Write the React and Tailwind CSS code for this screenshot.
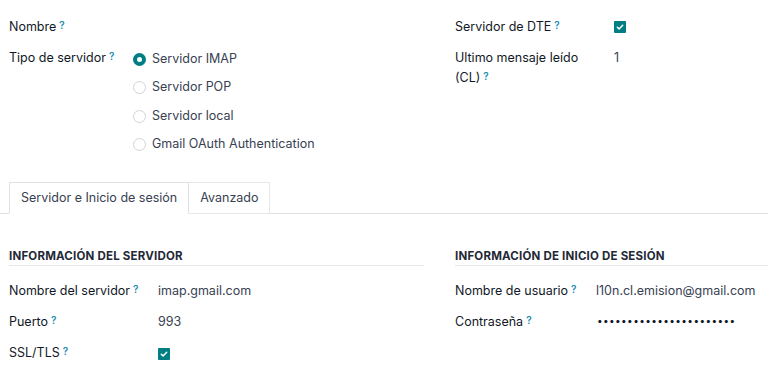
import React from "react";

function Help() {
  return <sup className="ml-[3px] text-[10px] font-semibold text-[#1a8bb0] relative -top-[2px]">?</sup>;
}

function Check() {
  return (
    <span className="inline-flex w-[12px] h-[12px] items-center justify-center bg-[#017e84] rounded-[1px]">
      <svg width="8" height="8" viewBox="0 0 8 8" fill="none">
        <path d="M1.3 4.2 L3.1 5.9 L6.7 2.2" stroke="white" strokeWidth="1.5" strokeLinecap="round" strokeLinejoin="round" />
      </svg>
    </span>
  );
}

function Radio({ checked, label }) {
  return (
    <div className="flex items-center h-[28.5px]">
      {checked ? (
        <span className="w-[13px] h-[13px] rounded-full border-[4px] border-[#017e84] bg-white" />
      ) : (
        <span className="w-[13px] h-[13px] rounded-full border border-[#d4d4d8] bg-white" />
      )}
      <span className="ml-[6px] text-[#374151]">{label}</span>
    </div>
  );
}

export default function App() {
  return (
    <div
      className="w-[768px] h-[374px] bg-white text-[12.5px] text-[#111827] overflow-hidden"
      style={{ fontFamily: "Inter, 'Noto Sans', sans-serif" }}
    >
      {/* top section */}
      <div className="grid grid-cols-[415px_313px] gap-x-[31px] pl-[9px] pt-[17px]">
        <div>
          <div className="flex h-[20px] items-center">
            <span>Nombre</span>
            <Help />
          </div>
          <div className="flex mt-[8px]">
            <div className="w-[124px] pt-[4px]">
              <span>Tipo de servidor</span>
              <Help />
            </div>
            <div>
              <Radio checked label="Servidor IMAP" />
              <Radio label="Servidor POP" />
              <Radio label="Servidor local" />
              <Radio label="Gmail OAuth Authentication" />
            </div>
          </div>
        </div>
        <div>
          <div className="flex h-[20px] items-center">
            <div className="w-[159px]">
              <span>Servidor de DTE</span>
              <Help />
            </div>
            <Check />
          </div>
          <div className="flex mt-[11px] leading-[20px]">
            <div className="w-[159px]">
              Ultimo mensaje leído
              <br />
              (CL)
              <Help />
            </div>
            <span className="text-[#374151]">1</span>
          </div>
        </div>
      </div>

      {/* tabs */}
      <div className="mt-[23px] border-b border-[#dee2e6] flex pl-[9px]">
        <div className="h-[32px] px-[11px] flex items-center border border-[#dee2e6] border-b-white -mb-px bg-white text-[#374151]">
          Servidor e Inicio de sesión
        </div>
        <div className="h-[32px] px-[11px] flex items-center border border-l-0 border-[#e5e7eb] -mb-px text-[#374151]">
          Avanzado
        </div>
      </div>

      {/* server / login info */}
      <div className="grid grid-cols-[415px_313px] gap-x-[31px] pl-[9px] pt-[34px]">
        <div>
          <div className="text-[11.5px] font-bold tracking-[0.2px] text-[#1f2937] border-b border-[#e5e7eb]">
            INFORMACIÓN DEL SERVIDOR
          </div>
          <div className="mt-[10px] flex flex-col">
            <div className="flex h-[31px] items-center">
              <div className="w-[149px]">
                Nombre del servidor
                <Help />
              </div>
              <span className="text-[#374151]">imap.gmail.com</span>
            </div>
            <div className="flex h-[31px] items-center">
              <div className="w-[149px]">
                Puerto
                <Help />
              </div>
              <span className="text-[#374151]">993</span>
            </div>
            <div className="flex h-[31px] items-center">
              <div className="w-[149px]">
                SSL/TLS
                <Help />
              </div>
              <Check />
            </div>
          </div>
        </div>
        <div>
          <div className="text-[11.5px] font-bold tracking-[0.2px] text-[#1f2937] border-b border-[#e5e7eb]">
            INFORMACIÓN DE INICIO DE SESIÓN
          </div>
          <div className="mt-[10px] flex flex-col">
            <div className="flex h-[31px] items-center">
              <div className="w-[141px]">
                Nombre de usuario
                <Help />
              </div>
              <span className="text-[#374151]">l10n.cl.emision@gmail.com</span>
            </div>
            <div className="flex h-[31px] items-center">
              <div className="w-[142px]">
                Contraseña
                <Help />
              </div>
              <span className="text-[#111827] tracking-[0.4px] text-[10px] -mt-[4px]">
                {"•".repeat(23)}
              </span>
            </div>
          </div>
        </div>
      </div>
    </div>
  );
}
